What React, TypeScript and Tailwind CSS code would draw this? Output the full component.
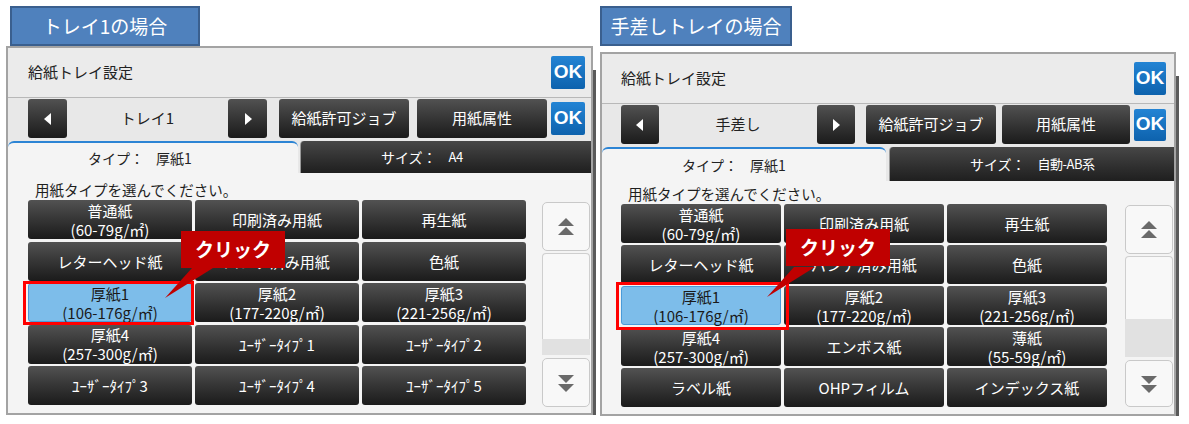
import React from "react";

type Btn = { a: string; b?: string; sel?: boolean };

type Cfg = {
  outer: string;
  title: string;
  okTop: string;
  row2: string;
  arrow: string;
  mid: string;
  b1: string;
  b2: string;
  ok2: string;
  tabs: string;
  tabA: string;
  textRow: string;
  grid: string;
  scroll: string;
  track: string;
  thumb: string;
  down: string;
  red: string;
};

const head: Btn[] = [
  { a: "普通紙", b: "(60-79g/㎡)" },
  { a: "印刷済み用紙" },
  { a: "再生紙" },
  { a: "レターヘッド紙" },
  { a: "パンチ済み用紙" },
  { a: "色紙" },
  { a: "厚紙1", b: "(106-176g/㎡)", sel: true },
  { a: "厚紙2", b: "(177-220g/㎡)" },
  { a: "厚紙3", b: "(221-256g/㎡)" },
  { a: "厚紙4", b: "(257-300g/㎡)" },
];

const tray1: Btn[] = [
  ...head,
  { a: "ﾕｰｻﾞｰﾀｲﾌﾟ1" },
  { a: "ﾕｰｻﾞｰﾀｲﾌﾟ2" },
  { a: "ﾕｰｻﾞｰﾀｲﾌﾟ3" },
  { a: "ﾕｰｻﾞｰﾀｲﾌﾟ4" },
  { a: "ﾕｰｻﾞｰﾀｲﾌﾟ5" },
];

const bypass: Btn[] = [
  ...head,
  { a: "エンボス紙" },
  { a: "薄紙", b: "(55-59g/㎡)" },
  { a: "ラベル紙" },
  { a: "OHPフィルム" },
  { a: "インデックス紙" },
];

const leftCfg: Cfg = {
  outer: "w-[587px] h-[369px]",
  title: "h-[50px] pl-[20px] pr-[6px]",
  okTop: "w-[34px] h-[33px]",
  row2: "h-[43px] pt-[1px] pb-[3px] pl-[20px]",
  arrow: "w-[39px]",
  mid: "w-[161px]",
  b1: "ml-[12px] w-[130px]",
  b2: "ml-[8px] w-[130px]",
  ok2: "ml-[4px] w-[34px] h-[33px]",
  tabs: "h-[32px] gap-[2px]",
  tabA: "w-[290px]",
  textRow: "h-[27px] pl-[27px]",
  grid: "ml-[20px] grid-cols-[164px_164px_164px] gap-x-[3px] auto-rows-[39px] gap-y-[2.5px]",
  scroll: "ml-[16px] mt-[2px]",
  track: "h-[86px]",
  thumb: "h-[16px]",
  down: "h-[49px]",
  red: "-left-[5px] -right-[2px] -top-[2px] -bottom-[3px]",
};

const rightCfg: Cfg = {
  outer: "w-[576px] h-[364px]",
  title: "h-[50px] pl-[19px] pr-[8px]",
  okTop: "w-[32px] h-[33px]",
  row2: "h-[43px] pt-[1px] pb-[3px] pl-[19px]",
  arrow: "w-[38px]",
  mid: "w-[158px]",
  b1: "ml-[11px] w-[130px]",
  b2: "ml-[6px] w-[128px]",
  ok2: "ml-[4px] w-[32px] h-[32px]",
  tabs: "h-[34px] gap-[3px]",
  tabA: "w-[284px]",
  textRow: "h-[23px] pl-[26px]",
  grid: "ml-[19px] grid-cols-[160px_160px_160px] gap-x-[3px] auto-rows-[39px] gap-y-[2px]",
  scroll: "ml-[18px] mt-[1px]",
  track: "h-[63px]",
  thumb: "h-[38px]",
  down: "h-[47px]",
  red: "-left-[5px] -right-[8px] -top-[4px] -bottom-[5px]",
};

const dark = "bg-linear-to-b from-[#525252] to-[#1b1b1b] text-white rounded-[3px]";

function Ok({ cls }: { cls: string }) {
  return (
    <div
      className={`${cls} flex items-center justify-center rounded-[2px] bg-linear-to-b from-[#2384d4] to-[#0d62ad] font-['Liberation_Sans',sans-serif] text-[19px] font-bold text-white`}
    >
      OK
    </div>
  );
}

function Arrow({ dir }: { dir: "l" | "r" }) {
  return (
    <svg width="8" height="12" viewBox="0 0 8 12">
      {dir === "l" ? (
        <polygon points="7,0 7,12 0,6" fill="#fff" />
      ) : (
        <polygon points="1,0 1,12 8,6" fill="#fff" />
      )}
    </svg>
  );
}

function Panel({ c, tray, size, buttons }: { c: Cfg; tray: string; size: string; buttons: Btn[] }) {
  return (
    <div className={`${c.outer} flex flex-col border-2 border-[#a3a3a3] bg-[#f4f4f4]`}>
      {/* title bar */}
      <div className={`${c.title} flex items-center justify-between border-b border-[#b8b8b8] bg-[#ebebeb]`}>
        <span className="text-[15px] text-[#222]">給紙トレイ設定</span>
        <Ok cls={c.okTop} />
      </div>

      {/* tray selector row */}
      <div className={`${c.row2} flex items-stretch bg-[#e8e8e8]`}>
        <div className={`${c.arrow} ${dark} flex items-center justify-center`}>
          <Arrow dir="l" />
        </div>
        <div className={`${c.mid} flex items-center justify-center text-[15px] text-[#222]`}>{tray}</div>
        <div className={`${c.arrow} ${dark} flex items-center justify-center`}>
          <Arrow dir="r" />
        </div>
        <div className={`${c.b1} ${dark} flex items-center justify-center text-[15px]`}>給紙許可ジョブ</div>
        <div className={`${c.b2} ${dark} flex items-center justify-center text-[15px]`}>用紙属性</div>
        <div className="flex items-center">
          <Ok cls={c.ok2} />
        </div>
      </div>

      {/* tabs */}
      <div className={`${c.tabs} flex bg-[#e8e8e8]`}>
        <div
          className={`${c.tabA} flex items-center rounded-t-[6px] border-t-2 border-[#2c84d4] bg-[#f4f4f4] pl-[80px] text-[14px] text-[#222]`}
        >
          <span>タイプ：</span>
          <span className="ml-[12px]">厚紙1</span>
        </div>
        <div className="flex flex-1 items-center rounded-tl-[4px] border-l border-[#9a9a9a] bg-linear-to-b from-[#474747] to-[#1f1f1f] pl-[80px] text-[14px] text-white">
          <span>サイズ：</span>
          <span className="ml-[12px] text-[13px] tracking-[-0.5px]">{size}</span>
        </div>
      </div>

      {/* content */}
      <div className={`${c.textRow} flex items-end text-[14.5px] leading-[20px] text-[#1e1e1e]`}>
        用紙タイプを選んでください。
      </div>
      <div className="flex">
        <div className={`${c.grid} grid`}>
          {buttons.map((b, i) => (
            <div key={i} className={b.sel ? "relative z-10" : "relative"}>
              <div
                className={`flex h-full flex-col items-center justify-center text-[15px] leading-[19px] ${
                  b.sel
                    ? "rounded-[3px] border border-[#4a9bd9] bg-[#7dbdea] text-[#1a1a1a]"
                    : dark
                }`}
              >
                <span>{b.a}</span>
                {b.b && <span>{b.b}</span>}
              </div>
              {b.sel && <div className={`absolute ${c.red} border-[3px] border-[#ff0000]`} />}
            </div>
          ))}
        </div>
        <div className={`${c.scroll} flex w-[48px] flex-col`}>
          <div className="flex h-[49px] items-center justify-center rounded-[5px] border border-[#c9c9c9] bg-[#f8f8f8]">
            <svg width="18" height="20" viewBox="0 0 18 20">
              <polygon points="9,1 17,9 1,9" fill="#6a6a6a" />
              <polygon points="9,10 17,18 1,18" fill="#6a6a6a" />
            </svg>
          </div>
          <div className={`${c.track} mt-[2px] rounded-t-[4px] border border-b-0 border-[#cfcfcf] bg-[#f8f8f8]`} />
          <div className={`${c.thumb} bg-[#e1e1e1]`} />
          <div
            className={`${c.down} mt-[3px] flex items-center justify-center rounded-[5px] border border-[#c9c9c9] bg-[#f8f8f8]`}
          >
            <svg width="18" height="20" viewBox="0 0 18 20">
              <polygon points="1,2 17,2 9,10" fill="#6a6a6a" />
              <polygon points="1,11 17,11 9,19" fill="#6a6a6a" />
            </svg>
          </div>
        </div>
      </div>
    </div>
  );
}

function Label({ text, cls }: { text: string; cls: string }) {
  return (
    <div
      className={`${cls} flex h-[40px] items-center justify-center border-2 border-[#3a5f8e] bg-[#4f81bd] text-[19px] text-white`}
    >
      {text}
    </div>
  );
}

function Callout({ cls, tail }: { cls: string; tail: string }) {
  return (
    <div className={`absolute z-20 ${cls}`}>
      <div className="flex h-[37px] w-[104px] items-center justify-center bg-[#c00000] text-[19px] font-bold text-white">
        クリック
      </div>
      <svg className={`absolute ${tail}`} width="60" height="32" viewBox="0 0 60 32">
        <polygon points="27,0 48,0 0,30" fill="#c00000" />
      </svg>
    </div>
  );
}

export default function App() {
  return (
    <div className="relative flex h-[424px] w-[1189px] overflow-hidden bg-white font-['Noto_Sans_CJK_JP','Noto_Sans',sans-serif]">
      <div className="ml-[6px] flex flex-col">
        <Label text="トレイ1の場合" cls="ml-[4px] mt-[6px] w-[190px]" />
        <div className="flex">
          <Panel c={leftCfg} tray="トレイ1" size="A4" buttons={tray1} />
          <div className="mt-[24px] h-[345px] w-[3px] bg-[#5a5a5a]" />
        </div>
      </div>
      <div className="ml-[4px] flex flex-col">
        <Label text="手差しトレイの場合" cls="mt-[6px] w-[192px]" />
        <div className="mt-[6px] flex">
          <Panel c={rightCfg} tray="手差し" size="自動-AB系" buttons={bypass} />
          <div className="mt-[24px] h-[340px] w-[3px] bg-[#5a5a5a]" />
        </div>
      </div>

      <Callout cls="left-[181px] top-[231px]" tail="left-[-16px] top-[37px]" />
      <Callout cls="left-[786px] top-[229px]" tail="left-[-19px] top-[38px]" />
    </div>
  );
}
